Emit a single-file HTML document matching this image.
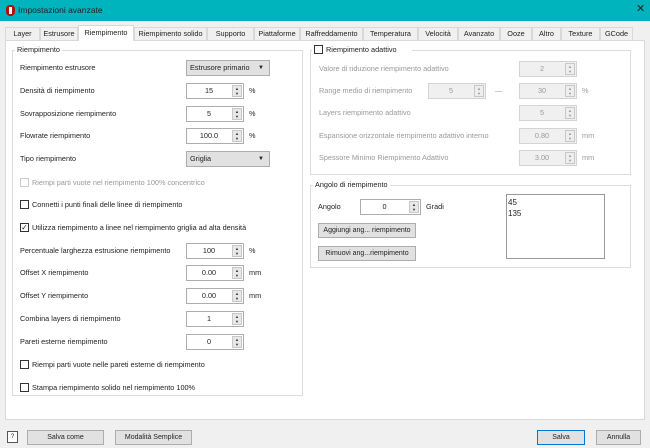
<!DOCTYPE html><html><head><meta charset="utf-8"><style>
*{box-sizing:border-box;margin:0;padding:0}
body{width:650px;height:448px;background:#f0f0f0;font-family:"Liberation Sans",sans-serif;font-size:7.3px;color:#222;position:relative;overflow:hidden}
.a{position:absolute;white-space:nowrap}
.t{position:absolute;white-space:nowrap;line-height:10px}
.tab{position:absolute;top:27px;height:13px;border:1px solid #d9d9d9;border-bottom:none;background:#f0f0f0;text-align:center;line-height:12px;font-size:7.3px}
.grp{position:absolute;border:1px solid #dcdcdc;background:#fff}
.gt{position:absolute;background:#fff;padding:0 2px;line-height:8px}
.spin{position:absolute;height:16px;border:1px solid #adadad;background:#fff;text-align:center;line-height:14px}
.spin .v{position:absolute;left:0;right:12px;top:0;text-align:center}
.spin .b{position:absolute;right:1px;top:1px;width:10px;height:12px;background:#e8e8e8;border:1px solid #c8c8c8;font-size:4px;line-height:5px;color:#333}
.dis{background:#f0f0f0;border-color:#d4d4d4;color:#999}
.dis .b{color:#999;background:#eee}
.cb{position:absolute;width:9px;height:9px;border:1px solid #333;background:#fff}
.btn{position:absolute;border:1px solid #adadad;background:#e1e1e1;text-align:center;font-size:7px}
.g{color:#999}
</style></head><body>
<div class="a" style="left:0;top:0;width:650px;height:21px;background:#00b4be"></div>
<div class="a" style="left:6px;top:5px;width:9px;height:11px;border-radius:4px;background:#b01010"></div>
<div class="a" style="left:9px;top:7px;width:3px;height:7px;background:#fff"></div>
<div class="t" style="left:18px;top:5px;font-size:8.5px;color:#222">Impostazioni avanzate</div>
<div class="t" style="left:636px;top:4px;font-size:11px">✕</div>

<div class="a" style="left:5px;top:40px;width:640px;height:380px;background:#fff;border:1px solid #d9d9d9"></div>
<div class="tab" style="left:5px;width:35px">Layer</div>
<div class="tab" style="left:40px;width:38px">Estrusore</div>
<div class="tab" style="left:78px;width:56px;top:25px;height:16px;background:#fff;line-height:14px">Riempimento</div>
<div class="tab" style="left:134px;width:73px">Riempimento solido</div>
<div class="tab" style="left:207px;width:47px">Supporto</div>
<div class="tab" style="left:254px;width:46px">Piattaforme</div>
<div class="tab" style="left:300px;width:63px">Raffreddamento</div>
<div class="tab" style="left:363px;width:55px">Temperatura</div>
<div class="tab" style="left:418px;width:40px">Velocità</div>
<div class="tab" style="left:458px;width:42px">Avanzato</div>
<div class="tab" style="left:500px;width:32px">Ooze</div>
<div class="tab" style="left:532px;width:29px">Altro</div>
<div class="tab" style="left:561px;width:39px">Texture</div>
<div class="tab" style="left:600px;width:33px">GCode</div>

<!-- left group -->
<div class="grp" style="left:12px;top:50px;width:291px;height:346px"></div>
<div class="gt" style="left:15px;top:46px">Riempimento</div>
<div class="t" style="left:20px;top:63px">Riempimento estrusore</div>
<div class="a" style="left:186px;top:60px;width:84px;height:16px;background:#e1e1e1;border:1px solid #adadad;line-height:14px;padding-left:3px">Estrusore primario<span style="position:absolute;right:5px;font-size:6px">▼</span></div>
<div class="t" style="left:20px;top:86px">Densità di riempimento</div>
<div class="spin" style="left:186px;top:83px;width:58px"><span class="v">15</span><span class="b">▲<br>▼</span></div><div class="t" style="left:249px;top:86px">%</div>
<div class="t" style="left:20px;top:109px">Sovrapposizione riempimento</div>
<div class="spin" style="left:186px;top:106px;width:58px"><span class="v">5</span><span class="b">▲<br>▼</span></div><div class="t" style="left:249px;top:109px">%</div>
<div class="t" style="left:20px;top:131px">Flowrate riempimento</div>
<div class="spin" style="left:186px;top:128px;width:58px"><span class="v">100.0</span><span class="b">▲<br>▼</span></div><div class="t" style="left:249px;top:131px">%</div>
<div class="t" style="left:20px;top:154px">Tipo riempimento</div>
<div class="a" style="left:186px;top:151px;width:84px;height:16px;background:#e1e1e1;border:1px solid #adadad;line-height:14px;padding-left:3px">Griglia<span style="position:absolute;right:5px;font-size:6px">▼</span></div>
<div class="cb" style="left:20px;top:178px;border-color:#ccc"></div><div class="t g" style="left:32px;top:178px">Riempi parti vuote nel riempimento 100% concentrico</div>
<div class="cb" style="left:20px;top:200px"></div><div class="t" style="left:32px;top:200px">Connetti i punti finali delle linee di riempimento</div>
<div class="cb" style="left:20px;top:223px;font-size:8px;line-height:7px;text-align:center">✓</div><div class="t" style="left:32px;top:223px">Utilizza riempimento a linee nel riempimento griglia ad alta densità</div>
<div class="t" style="left:20px;top:246px">Percentuale larghezza estrusione riempimento</div>
<div class="spin" style="left:186px;top:243px;width:58px"><span class="v">100</span><span class="b">▲<br>▼</span></div><div class="t" style="left:249px;top:246px">%</div>
<div class="t" style="left:20px;top:268px">Offset X riempimento</div>
<div class="spin" style="left:186px;top:265px;width:58px"><span class="v">0.00</span><span class="b">▲<br>▼</span></div><div class="t" style="left:249px;top:268px">mm</div>
<div class="t" style="left:20px;top:291px">Offset Y riempimento</div>
<div class="spin" style="left:186px;top:288px;width:58px"><span class="v">0.00</span><span class="b">▲<br>▼</span></div><div class="t" style="left:249px;top:291px">mm</div>
<div class="t" style="left:20px;top:314px">Combina layers di riempimento</div>
<div class="spin" style="left:186px;top:311px;width:58px"><span class="v">1</span><span class="b">▲<br>▼</span></div>
<div class="t" style="left:20px;top:337px">Pareti esterne riempimento</div>
<div class="spin" style="left:186px;top:334px;width:58px"><span class="v">0</span><span class="b">▲<br>▼</span></div>
<div class="cb" style="left:20px;top:360px"></div><div class="t" style="left:32px;top:360px">Riempi parti vuote nelle pareti esterne di riempimento</div>
<div class="cb" style="left:20px;top:383px"></div><div class="t" style="left:32px;top:383px">Stampa riempimento solido nel riempimento 100%</div>

<!-- right top group -->
<div class="grp" style="left:310px;top:50px;width:321px;height:125px"></div>
<div class="a" style="left:312px;top:45px;width:100px;height:10px;background:#fff"></div>
<div class="cb" style="left:314px;top:45px"></div><div class="t" style="left:326px;top:45px">Riempimento adattivo</div>
<div class="t g" style="left:319px;top:64px">Valore di riduzione riempimento adattivo</div>
<div class="spin dis" style="left:519px;top:61px;width:58px"><span class="v">2</span><span class="b">▲<br>▼</span></div>
<div class="t g" style="left:319px;top:86px">Range medio di riempimento</div>
<div class="spin dis" style="left:428px;top:83px;width:58px"><span class="v">5</span><span class="b">▲<br>▼</span></div>
<div class="t g" style="left:495px;top:86px">—</div>
<div class="spin dis" style="left:519px;top:83px;width:58px"><span class="v">30</span><span class="b">▲<br>▼</span></div><div class="t g" style="left:582px;top:86px">%</div>
<div class="t g" style="left:319px;top:108px">Layers riempimento adattivo</div>
<div class="spin dis" style="left:519px;top:105px;width:58px"><span class="v">5</span><span class="b">▲<br>▼</span></div>
<div class="t g" style="left:319px;top:131px">Espansione orizzontale riempimento adattivo interno</div>
<div class="spin dis" style="left:519px;top:128px;width:58px"><span class="v">0.80</span><span class="b">▲<br>▼</span></div><div class="t g" style="left:582px;top:131px">mm</div>
<div class="t g" style="left:319px;top:153px">Spessore Minimo Riempimento Adattivo</div>
<div class="spin dis" style="left:519px;top:150px;width:58px"><span class="v">3.00</span><span class="b">▲<br>▼</span></div><div class="t g" style="left:582px;top:153px">mm</div>

<!-- angle group -->
<div class="grp" style="left:310px;top:185px;width:321px;height:83px"></div>
<div class="gt" style="left:313px;top:181px">Angolo di riempimento</div>
<div class="t" style="left:318px;top:202px">Angolo</div>
<div class="spin" style="left:360px;top:199px;width:61px"><span class="v">0</span><span class="b">▲<br>▼</span></div>
<div class="t" style="left:426px;top:202px">Gradi</div>
<div class="btn" style="left:318px;top:223px;width:98px;height:15px;line-height:13px">Aggiungi ang... riempimento</div>
<div class="btn" style="left:318px;top:246px;width:98px;height:15px;line-height:13px">Rimuovi ang...riempimento</div>
<div class="a" style="left:506px;top:194px;width:99px;height:65px;border:1px solid #999;background:#fff;font-size:8px;line-height:11px;padding:2px 1px">45<br>135</div>

<!-- bottom -->
<div class="a" style="left:7px;top:431px;width:11px;height:12px;border:1px solid #555;background:#fff;font-size:6px;text-align:center;line-height:10px">?</div>
<div class="btn" style="left:27px;top:430px;width:77px;height:15px;line-height:13px">Salva come</div>
<div class="btn" style="left:115px;top:430px;width:77px;height:15px;line-height:13px">Modalità Semplice</div>
<div class="btn" style="left:537px;top:430px;width:48px;height:15px;line-height:13px;border-color:#0078d7">Salva</div>
<div class="btn" style="left:596px;top:430px;width:45px;height:15px;line-height:13px">Annulla</div>
</body></html>
